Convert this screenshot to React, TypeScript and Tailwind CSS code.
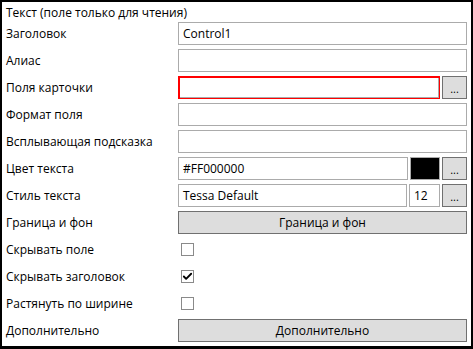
import { Check } from 'lucide-react';

const font = { fontFamily: '"Open Sans", "Noto Sans", sans-serif' };

const Row = ({ label, children }: { label: string; children: React.ReactNode }) => (
  <div className="flex h-[23px] items-center">
    <div className="w-[172px] shrink-0 text-[12px] leading-none text-black">{label}</div>
    <div className="flex h-full flex-1 items-center gap-[2px]">{children}</div>
  </div>
);

const TextBox = ({ value, className = '' }: { value?: string; className?: string }) => (
  <div className={`flex h-full items-center border border-[#ababab] bg-white pl-[4px] text-[12px] text-black ${className}`}>
    {value}
  </div>
);

const Dots = () => (
  <button className="flex h-full w-[25px] shrink-0 items-end justify-center border border-[#707070] bg-[#dddddd] pb-[4px] text-[11px] leading-none text-black">
    ...
  </button>
);

const WideButton = ({ text }: { text: string }) => (
  <button className="flex h-full flex-1 items-center justify-center border border-[#707070] bg-[#dddddd] text-[12px] text-black">
    {text}
  </button>
);

const CheckBox = ({ checked }: { checked?: boolean }) => (
  <div className="ml-[3px] flex h-[13px] w-[13px] items-center justify-center border border-[#8a8a8a] bg-white">
    {checked && <Check className="h-[11px] w-[11px] text-black" strokeWidth={4} />}
  </div>
);

export default function App() {
  return (
    <div style={font} className="flex h-[349px] w-[473px] flex-col border-x-2 border-t-2 border-b-[3px] border-black bg-white px-[4px]">
      <div className="flex h-[20px] items-center pt-[2px] text-[12px] text-black">Текст (поле только для чтения)</div>
      <div className="flex flex-col gap-[4px]">
        <Row label="Заголовок">
          <TextBox value="Control1" className="flex-1" />
        </Row>
        <Row label="Алиас">
          <TextBox className="flex-1" />
        </Row>
        <Row label="Поля карточки">
          <div className="h-full flex-1 border border-[#ff0000] bg-white shadow-[inset_1px_1px_0_0_#ff0000,inset_-1px_-1px_0_0_#ababab]" />
          <Dots />
        </Row>
        <Row label="Формат поля">
          <TextBox className="flex-1" />
        </Row>
        <Row label="Всплывающая подсказка">
          <TextBox className="flex-1" />
        </Row>
        <Row label="Цвет текста">
          <TextBox value="#FF000000" className="flex-1" />
          <div className="h-full w-[30px] shrink-0 border border-[#ababab] bg-black" />
          <Dots />
        </Row>
        <Row label="Стиль текста">
          <TextBox value="Tessa Default" className="flex-1" />
          <TextBox value="12" className="w-[31px] shrink-0" />
          <Dots />
        </Row>
        <Row label="Граница и фон">
          <WideButton text="Граница и фон" />
        </Row>
        <Row label="Скрывать поле">
          <CheckBox />
        </Row>
        <Row label="Скрывать заголовок">
          <CheckBox checked />
        </Row>
        <Row label="Растянуть по ширине">
          <CheckBox />
        </Row>
        <Row label="Дополнительно">
          <WideButton text="Дополнительно" />
        </Row>
      </div>
    </div>
  );
}
